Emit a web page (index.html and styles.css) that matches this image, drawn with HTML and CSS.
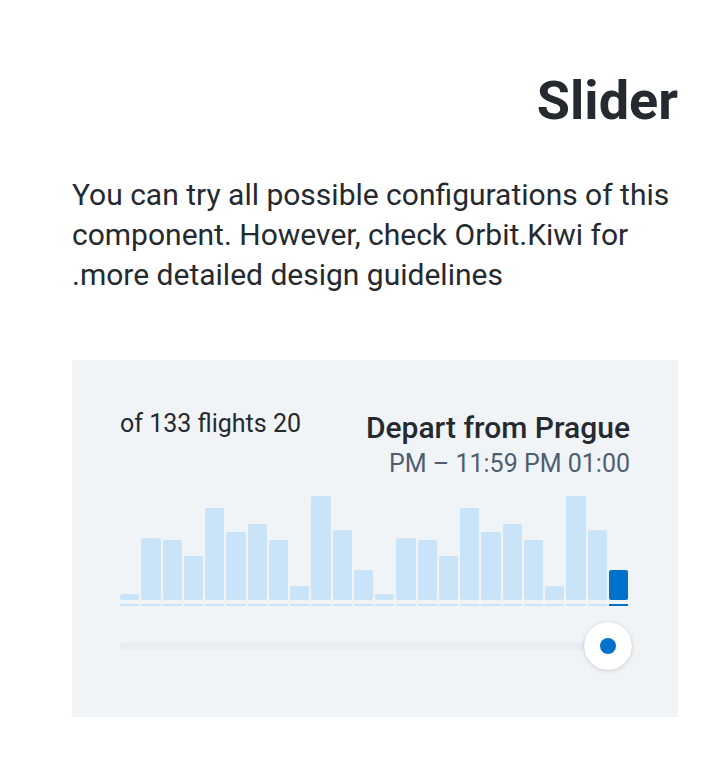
FILE: index.html
```html
<!DOCTYPE html>
<html lang="en" dir="rtl">
<head>
<meta charset="utf-8">
<title>Slider</title>
<link rel="stylesheet" href="styles.css">
</head>
<body>
<main class="page">
  <h1 class="title">Slider</h1>
  <p class="description">You can try all possible configurations of this component. However, check Orbit.Kiwi for more detailed design guidelines.</p>
  <section class="card">
    <div class="card-header">
      <div class="label-block">
        <div class="label">Depart from Prague</div>
        <div class="value">01:00 PM – 11:59 PM</div>
      </div>
      <div class="count">20 of 133 flights</div>
    </div>
    <div class="chart">
      <div class="bars">
        <div class="bar" style="height:6px"></div>
        <div class="bar" style="height:62px"></div>
        <div class="bar" style="height:60px"></div>
        <div class="bar" style="height:44px"></div>
        <div class="bar" style="height:92px"></div>
        <div class="bar" style="height:68px"></div>
        <div class="bar" style="height:76px"></div>
        <div class="bar" style="height:60px"></div>
        <div class="bar" style="height:14px"></div>
        <div class="bar" style="height:104px"></div>
        <div class="bar" style="height:70px"></div>
        <div class="bar" style="height:30px"></div>
        <div class="bar" style="height:6px"></div>
        <div class="bar" style="height:62px"></div>
        <div class="bar" style="height:60px"></div>
        <div class="bar" style="height:44px"></div>
        <div class="bar" style="height:92px"></div>
        <div class="bar" style="height:68px"></div>
        <div class="bar" style="height:76px"></div>
        <div class="bar" style="height:60px"></div>
        <div class="bar" style="height:14px"></div>
        <div class="bar" style="height:104px"></div>
        <div class="bar" style="height:70px"></div>
        <div class="bar bar-active" style="height:30px"></div>
      </div>
      <div class="ticks">
        <div class="tick"></div><div class="tick"></div><div class="tick"></div><div class="tick"></div>
        <div class="tick"></div><div class="tick"></div><div class="tick"></div><div class="tick"></div>
        <div class="tick"></div><div class="tick"></div><div class="tick"></div><div class="tick"></div>
        <div class="tick"></div><div class="tick"></div><div class="tick"></div><div class="tick"></div>
        <div class="tick"></div><div class="tick"></div><div class="tick"></div><div class="tick"></div>
        <div class="tick"></div><div class="tick"></div><div class="tick"></div><div class="tick tick-active"></div>
      </div>
      <div class="slider">
        <div class="track"></div>
        <div class="handle"><span class="handle-dot"></span></div>
      </div>
    </div>
  </section>
</main>
</body>
</html>
```
FILE: styles.css
```css
* { box-sizing: border-box; }
html, body { margin: 0; padding: 0; background: #ffffff; }
body {
  font-family: Roboto, "Liberation Sans", sans-serif;
  color: #252a31;
}
.page {
  padding: 69px 40px 40px 72px;
}
.title {
  margin: 0;
  font-size: 54px;
  line-height: 64px;
  font-weight: 700;
  text-align: right;
  color: #252a31;
}
.description {
  margin: 42px 0 0;
  font-size: 30px;
  line-height: 40px;
  text-align: left;
  color: #252a31;
}
.card {
  margin-top: 65px;
  background: #f1f4f7;
  padding: 48px 48px 47px;
}
.card-header {
  display: flex;
  justify-content: space-between;
  align-items: flex-start;
}
.label-block {
  display: flex;
  flex-direction: column;
  align-items: flex-start;
}
.label {
  font-size: 30px;
  line-height: 40px;
  font-weight: 500;
  color: #252a31;
}
.value {
  font-size: 25px;
  line-height: 32px;
  color: #4f5e71;
}
.count {
  font-size: 25px;
  line-height: 32px;
  color: #252a31;
}
.chart {
  direction: ltr;
  margin-top: 16px;
}
.bars {
  display: flex;
  align-items: flex-end;
  gap: 2px;
  height: 104px;
  padding-right: 2px;
}
.bar {
  flex: 1;
  background: #c9e3f8;
  border-radius: 2px;
}
.bar-active { background: #0172cb; }
.ticks {
  display: flex;
  gap: 2px;
  margin-top: 4px;
  padding-right: 2px;
}
.tick {
  flex: 1;
  height: 2px;
  background: #c9e3f8;
}
.tick-active { background: #0172cb; }
.slider {
  position: relative;
  margin-top: 16px;
  height: 48px;
  display: flex;
  align-items: center;
}
.track {
  width: 100%;
  height: 8px;
  border-radius: 4px;
  background: #e8edf1;
}
.handle {
  position: absolute;
  right: -2px;
  top: 0;
  width: 48px;
  height: 48px;
  border-radius: 50%;
  background: #ffffff;
  box-shadow: 0 1px 4px rgba(37, 42, 49, 0.16), 0 0 1px rgba(37, 42, 49, 0.2);
  display: flex;
  align-items: center;
  justify-content: center;
}
.handle-dot {
  width: 16px;
  height: 16px;
  border-radius: 50%;
  background: #0172cb;
}
```
